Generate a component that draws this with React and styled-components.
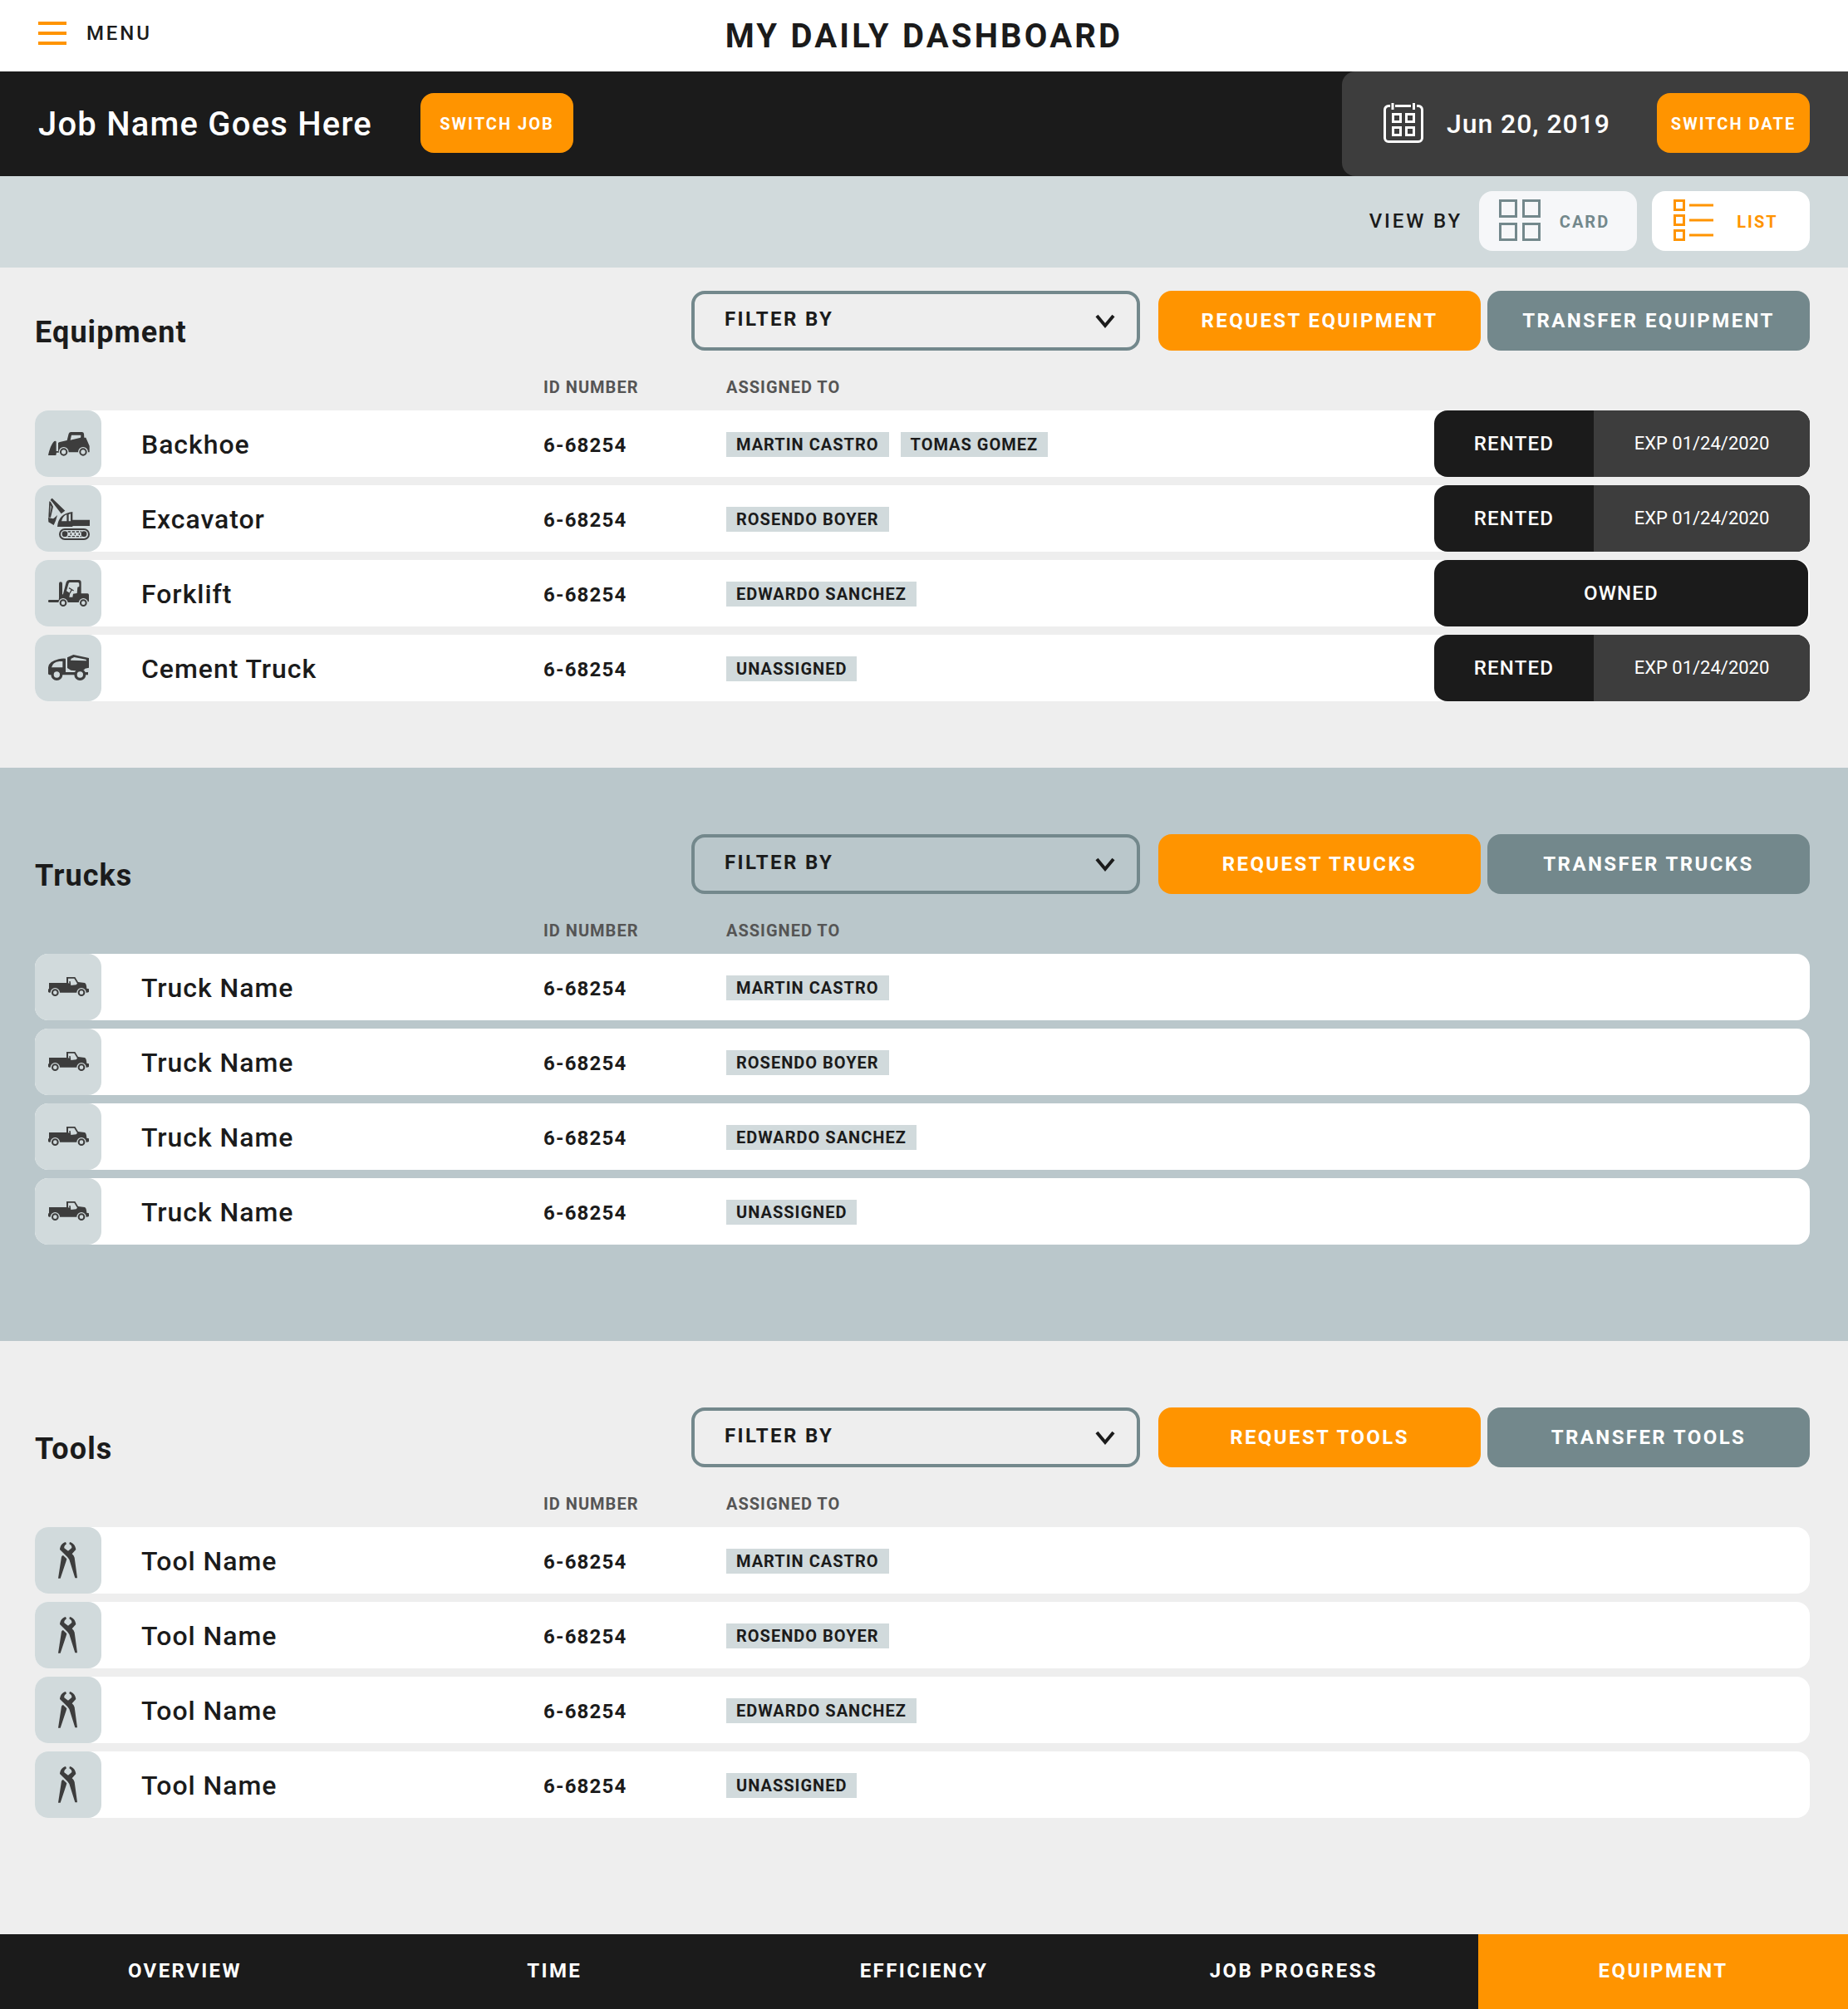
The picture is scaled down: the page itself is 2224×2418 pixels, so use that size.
import React from "react";
import styled, { createGlobalStyle, css } from "styled-components";

const c = {
  ink: "#1b1b1b",
  graphite: "#3d3d3d",
  orange: "#ff9400",
  slate: "#73888c",
  mist: "#d1dadc",
  steel: "#bac7cb",
  paper: "#eeeeee",
  muted: "#555555",
};

const GlobalStyle = createGlobalStyle`
  *, *::before, *::after { box-sizing: border-box; }
  body {
    margin: 0;
    background: ${c.paper};
    color: ${c.ink};
    font-family: Roboto, "Liberation Sans", sans-serif;
  }
  button, select { font: inherit; color: inherit; letter-spacing: inherit; }
`;

const Page = styled.div`
  display: flex;
  flex-direction: column;
  min-height: 100vh;
`;

/* ---------- top bar ---------- */

const TopBar = styled.header`
  display: grid;
  grid-template-columns: 1fr auto 1fr;
  align-items: start;
  padding: 0 46px;
  background: #ffffff;
`;

const MenuButton = styled.button`
  display: flex;
  align-items: center;
  justify-self: start;
  gap: 24px;
  height: 80px;
  padding: 0;
  border: 0;
  background: none;
  font-size: 24px;
  font-weight: 500;
  letter-spacing: 0.12em;
  cursor: pointer;
`;

const PageTitle = styled.h1`
  margin: 0;
  padding-top: 2px;
  font-size: 40px;
  line-height: 84px;
  font-weight: 700;
  letter-spacing: 0.08em;
`;

/* ---------- job bar ---------- */

const JobBar = styled.div`
  display: flex;
  justify-content: space-between;
  background: ${c.ink};
  color: #ffffff;
`;

const JobInfo = styled.div`
  display: flex;
  align-items: center;
  gap: 58px;
  padding: 26px 46px 28px;
`;

const JobName = styled.h2`
  margin: 0;
  padding-top: 4px;
  font-size: 40px;
  line-height: 48px;
  font-weight: 500;
  letter-spacing: 0.03em;
`;

const DateInfo = styled.div`
  display: flex;
  align-items: center;
  gap: 28px;
  padding: 26px 46px 28px 50px;
  border-radius: 16px 0 0 16px;
  background: ${c.graphite};
`;

const DateText = styled.time`
  margin-right: 28px;
  padding-top: 2px;
  font-size: 32px;
  line-height: 40px;
  font-weight: 500;
  letter-spacing: 0.03em;
`;

const SwitchButton = styled.button`
  width: 184px;
  height: 72px;
  padding: 2px 0 0;
  border: 0;
  border-radius: 16px;
  background: ${c.orange};
  color: #ffffff;
  font-size: 20px;
  font-weight: 700;
  letter-spacing: 0.1em;
  white-space: nowrap;
  cursor: pointer;
`;

/* ---------- view bar ---------- */

const ViewBar = styled.div`
  display: flex;
  align-items: center;
  justify-content: flex-end;
  gap: 18px;
  padding: 18px 46px 20px;
  background: ${c.mist};
`;

const ViewLabel = styled.span`
  margin-right: 2px;
  font-size: 24px;
  font-weight: 500;
  letter-spacing: 0.12em;
`;

const ViewButton = styled.button`
  display: flex;
  align-items: center;
  width: 190px;
  height: 72px;
  padding: 0 10px 2px 24px;
  border: 0;
  border-radius: 16px;
  background: ${(p) => (p.$active ? "#ffffff" : "#f6f7f9")};
  color: ${(p) => (p.$active ? c.orange : c.slate)};
  font-size: 20px;
  font-weight: 700;
  letter-spacing: 0.1em;
  cursor: pointer;
`;

const ViewButtonText = styled.span`
  flex: 1;
  padding-top: 4px;
  text-align: center;
`;

/* ---------- sections ---------- */

const Section = styled.section`
  padding: ${(p) => p.$top}px 46px ${(p) => p.$bottom}px 42px;
  background: ${(p) => (p.$tinted ? c.steel : c.paper)};
`;

const SectionHead = styled.div`
  display: flex;
  align-items: flex-end;
  gap: 8px;
`;

const SectionTitle = styled.h2`
  flex: 1;
  margin: 0;
  font-size: 36px;
  line-height: 44px;
  font-weight: 700;
  letter-spacing: 0.03em;
`;

const FilterBox = styled.div`
  position: relative;
  width: 540px;
  height: 72px;
  margin-right: 14px;
  color: ${c.ink};
`;

const FilterSelect = styled.select`
  width: 100%;
  height: 100%;
  padding: 0 72px 4px 36px;
  border: 4px solid ${c.slate};
  border-radius: 16px;
  background: transparent;
  appearance: none;
  font-size: 24px;
  font-weight: 700;
  letter-spacing: 0.1em;
  cursor: pointer;
`;

const FilterArrow = styled.svg`
  position: absolute;
  top: 28px;
  right: 30px;
  pointer-events: none;
`;

const ActionButton = styled.button`
  width: 388px;
  height: 72px;
  padding: 0;
  border: 0;
  border-radius: 16px;
  background: ${(p) => (p.$primary ? c.orange : c.slate)};
  color: #ffffff;
  font-size: 24px;
  font-weight: 700;
  letter-spacing: 0.1em;
  white-space: nowrap;
  cursor: pointer;
`;

/* ---------- asset table ---------- */

const Table = styled.table`
  width: 100%;
  table-layout: fixed;
  border-collapse: separate;
  border-spacing: 0 10px;
`;

const Col = styled.col`
  width: ${(p) => (p.$width ? `${p.$width}px` : "auto")};
`;

const HeadCell = styled.th`
  height: 52px;
  padding: 0 0 6px;
  vertical-align: bottom;
  text-align: left;
  color: ${c.muted};
  font-size: 20px;
  line-height: 24px;
  font-weight: 700;
  letter-spacing: 0.05em;
`;

const cell = css`
  height: 80px;
  padding: 0;
  background: #ffffff;
  text-align: left;
  vertical-align: middle;
`;

const IconCell = styled.td`
  ${cell}
  border-radius: 16px 0 0 16px;
`;

const IconTile = styled.div`
  width: 80px;
  height: 80px;
  border-radius: 16px;
  background: ${c.mist};
`;

const NameCell = styled.th`
  ${cell}
  padding: 2px 0 0 48px;
  font-size: 32px;
  line-height: 40px;
  font-weight: 500;
  letter-spacing: 0.03em;
`;

const IdCell = styled.td`
  ${cell}
  padding-top: 4px;
  font-size: 24px;
  line-height: 28px;
  font-weight: 700;
  letter-spacing: 0.05em;
`;

const PeopleCell = styled.td`
  ${cell}
`;

const People = styled.div`
  display: flex;
  gap: 14px;
  padding-top: 2px;
`;

const Person = styled.span`
  padding: 0 12px;
  background: ${c.mist};
  font-size: 20px;
  line-height: 30px;
  font-weight: 700;
  letter-spacing: 0.05em;
  white-space: nowrap;
`;

const StatusCell = styled.td`
  ${cell}
  border-radius: 0 16px 16px 0;
`;

const Status = styled.div`
  display: flex;
  height: 80px;
  margin-right: ${(p) => (p.$owned ? "2px" : 0)};
  overflow: hidden;
  border-radius: 16px;
  background: ${c.ink};
  color: #ffffff;
  line-height: 80px;
  text-align: center;
`;

const StatusKind = styled.span`
  flex: ${(p) => (p.$owned ? "1" : "0 0 192px")};
  font-size: 24px;
  font-weight: 500;
  letter-spacing: 0.05em;
`;

const StatusExpiry = styled.span`
  flex: 1;
  background: ${c.graphite};
  font-size: 22px;
`;

/* ---------- bottom navigation ---------- */

const BottomNav = styled.nav`
  display: flex;
  margin-top: auto;
  background: ${c.ink};
`;

const NavLink = styled.a`
  flex: 1 1 0;
  background: ${(p) => (p.$active ? c.orange : "transparent")};
  color: #ffffff;
  font-size: 24px;
  line-height: 88px;
  padding-bottom: 2px;
  font-weight: 700;
  letter-spacing: 0.1em;
  text-align: center;
  text-decoration: none;
`;

/* ---------- drawings ---------- */

const MenuIcon = () => (
  <svg width="34" height="28" viewBox="0 0 34 28" fill={c.orange} aria-hidden="true">
    <rect width="34" height="4" />
    <rect y="12" width="34" height="4" />
    <rect y="24" width="34" height="4" />
  </svg>
);

const CalendarIcon = () => (
  <svg width="48" height="48" viewBox="0 0 48 48" fill="none" stroke="#ffffff" strokeWidth="3" aria-hidden="true">
    <path d="M8 3.5H6A4.5 4.5 0 0 0 1.5 8V42A4.5 4.5 0 0 0 6 46.5H42A4.5 4.5 0 0 0 46.5 42V8A4.5 4.5 0 0 0 42 3.5H40M14 3.5H33" />
    <path d="M11 0V8M36.5 0V8" />
    <path d="M11.5 13.5h9v9h-9zM27.5 13.5h9v9h-9zM11.5 29.5h9v9h-9zM27.5 29.5h9v9h-9z" />
  </svg>
);

const CardIcon = () => (
  <svg width="50" height="50" viewBox="0 0 50 50" fill="none" stroke="currentColor" strokeWidth="3" aria-hidden="true">
    <path d="M1.5 1.5h19v19h-19zM29.5 1.5h19v19h-19zM1.5 29.5h19v19h-19zM29.5 29.5h19v19h-19z" />
  </svg>
);

const ListIcon = () => (
  <svg width="50" height="50" viewBox="-2 0 50 50" fill="none" stroke="currentColor" strokeWidth="3" aria-hidden="true">
    <path d="M1.5 1.5h11v11h-11zM1.5 19.5h11v11h-11zM1.5 37.5h11v11h-11z" />
    <path d="M19 7h29M19 25h29M19 43h29" />
  </svg>
);

const TileArt = ({ children }) => (
  <svg width="80" height="80" viewBox="0 0 240 240" fill={c.graphite} display="block" aria-hidden="true">
    {children}
  </svg>
);

const Wheel = ({ x, y, r, halo, line = 6 }) => (
  <>
    <circle cx={x} cy={y} r={halo} fill={c.mist} />
    <circle cx={x} cy={y} r={r} fill="none" stroke={c.graphite} strokeWidth={line} />
  </>
);

const BackhoeArt = () => (
  <TileArt>
    <path d="M48 162C52 142 60 120 70 111Q77 108 77 114V147H87V152H78L76 162Z" />
    <path
      fillRule="evenodd"
      d="M84 152V118Q85 115 90 114L116 108L122 84Q124 78 130 78H170Q176 78 177 84L178 98H184L197 128V151H186V151H84ZM132 89L128 107L165 98Q166 97 166 89Z"
    />
    <Wheel x={104} y={150} r={11} halo={18} />
    <Wheel x={174} y={150} r={11} halo={18} />
  </TileArt>
);

const ExcavatorArt = () => (
  <TileArt>
    <path d="M56 54L60 48Q63 46 67 52L109 92L95 103L62 60Z" />
    <path d="M52 58L57 60L66 77L57 116L49 116Z" />
    <path d="M56 72L59 78L55 106Z" fill={c.mist} />
    <path d="M48 117L66 121Q72 117 81 108L75 128L68 144L49 133Z" />
    <path
      fillRule="evenodd"
      d="M81 150Q84 103 136 96V125H198V147H136V150ZM96 130Q101 110 115 106V130ZM122 105L129 103V130H122Z"
    />
    <rect x="90" y="159" width="105" height="36" rx="18" fill="none" stroke={c.graphite} strokeWidth="6" />
    <circle cx="108" cy="176" r="10" />
    <circle cx="177" cy="176" r="10" />
    <path d="M119 168H168M119 185H168" stroke={c.graphite} strokeWidth="4" strokeDasharray="10 5" />
    <path d="M130 173V180M145 173V180M160 173V180" stroke={c.graphite} strokeWidth="4" />
  </TileArt>
);

const ForkliftArt = () => (
  <TileArt>
    <rect x="48" y="144" width="42" height="9" rx="4" />
    <rect x="87" y="79" width="12" height="66" rx="6" />
    <path
      fillRule="evenodd"
      d="M86 140L102 122L113 80Q116 72 124 72H158Q167 72 167 82V121H190Q195 121 195 127V149L190 153H88ZM122 84Q123 81 127 81H155Q160 81 160 86V96L154 98L152 120L138 122L136 134H124L127 120L114 112Z"
    />
    <path d="M123 101L140 111M133 107L126 120" stroke={c.graphite} strokeWidth="4" fill="none" />
    <Wheel x={102} y={155} r={10} halo={17} />
    <Wheel x={175} y={155} r={10} halo={17} />
  </TileArt>
);

const CementTruckArt = () => (
  <TileArt>
    <path
      fillRule="evenodd"
      d="M48 142V118Q50 96 86 88Q98 85 111 86V135H192V145H52ZM60 118Q64 99 88 96H100V118Z"
    />
    <path
      fillRule="evenodd"
      d="M117 82L139 72L195 84V119L181 122Q176 130 163 130H146L130 128L117 120ZM129 92L131 86L142 81L184 89Q187 92 186 94Z"
    />
    <circle cx="79" cy="144" r="13" fill={c.mist} />
    <circle cx="163" cy="144" r="13" fill={c.mist} />
    <circle cx="79" cy="144" r="16" fill="none" stroke={c.graphite} strokeWidth="10" />
    <circle cx="163" cy="144" r="16" fill="none" stroke={c.graphite} strokeWidth="10" />
  </TileArt>
);

const PickupArt = () => (
  <TileArt>
    <path
      fillRule="evenodd"
      d="M48 138V128L51 126V105H114V84H145L156 102L180 105Q186 107 187 125L195 127V138L188 140H52ZM120 89H142L153 107L149 112L130 114L128 99H124V108L120 105Z"
    />
    <Wheel x={73} y={140} r={10} halo={17} />
    <Wheel x={168} y={140} r={10} halo={17} />
  </TileArt>
);

const PliersArt = () => (
  <TileArt>
    <path d="M111 54C98 58 91 68 90 81L118 109L124 117L145 184H153L143 110Q141 102 134 97L148 81C147 68 139 58 126 54L124 61Q134 66 133 75L120 86L106 76Q104 68 114 61Z" />
    <path d="M102 102L115 115L113 122L92 185H84L96 107Q98 102 102 102Z" />
  </TileArt>
);

/* ---------- content ---------- */

const SECTIONS = [
  {
    title: "Equipment",
    top: 28,
    bottom: 70,
    status: true,
    rows: [
      { name: "Backhoe", Art: BackhoeArt, people: ["MARTIN CASTRO", "TOMAS GOMEZ"], expires: "01/24/2020" },
      { name: "Excavator", Art: ExcavatorArt, people: ["ROSENDO BOYER"], expires: "01/24/2020" },
      { name: "Forklift", Art: ForkliftArt, people: ["EDWARDO SANCHEZ"] },
      { name: "Cement Truck", Art: CementTruckArt, people: ["UNASSIGNED"], expires: "01/24/2020" },
    ],
  },
  {
    title: "Trucks",
    top: 80,
    bottom: 106,
    tinted: true,
    rows: ["MARTIN CASTRO", "ROSENDO BOYER", "EDWARDO SANCHEZ", "UNASSIGNED"].map((person) => ({
      name: "Truck Name",
      Art: PickupArt,
      people: [person],
    })),
  },
  {
    title: "Tools",
    top: 80,
    bottom: 130,
    rows: ["MARTIN CASTRO", "ROSENDO BOYER", "EDWARDO SANCHEZ", "UNASSIGNED"].map((person) => ({
      name: "Tool Name",
      Art: PliersArt,
      people: [person],
    })),
  },
];

const NAV = ["OVERVIEW", "TIME", "EFFICIENCY", "JOB PROGRESS", "EQUIPMENT"];

function StatusBadge({ expires }) {
  const owned = !expires;
  return (
    <Status $owned={owned}>
      <StatusKind $owned={owned}>{owned ? "OWNED" : "RENTED"}</StatusKind>
      {expires && <StatusExpiry>EXP {expires}</StatusExpiry>}
    </Status>
  );
}

function AssetSection({ title, top, bottom, tinted, status, rows }) {
  const upper = title.toUpperCase();
  return (
    <Section $top={top} $bottom={bottom} $tinted={tinted}>
      <SectionHead>
        <SectionTitle>{title}</SectionTitle>
        <FilterBox>
          <FilterSelect aria-label={`Filter ${title.toLowerCase()} by`} defaultValue="">
            <option value="">FILTER BY</option>
          </FilterSelect>
          <FilterArrow width="24" height="18" viewBox="0 0 24 18" fill="none" stroke="currentColor" strokeWidth="4" aria-hidden="true">
            <path d="M2 2L12 14L22 2" />
          </FilterArrow>
        </FilterBox>
        <ActionButton type="button" $primary>REQUEST {upper}</ActionButton>
        <ActionButton type="button">TRANSFER {upper}</ActionButton>
      </SectionHead>
      <Table>
        <colgroup>
          <Col $width={80} />
          <Col $width={532} />
          <Col $width={220} />
          <Col />
          <Col $width={452} />
        </colgroup>
        <thead>
          <tr>
            <HeadCell colSpan={2} />
            <HeadCell scope="col">ID NUMBER</HeadCell>
            <HeadCell scope="col" colSpan={2}>ASSIGNED TO</HeadCell>
          </tr>
        </thead>
        <tbody>
          {rows.map(({ name, Art, people, expires }, i) => (
            <tr key={i}>
              <IconCell>
                <IconTile><Art /></IconTile>
              </IconCell>
              <NameCell scope="row">{name}</NameCell>
              <IdCell>6-68254</IdCell>
              <PeopleCell>
                <People>
                  {people.map((person) => <Person key={person}>{person}</Person>)}
                </People>
              </PeopleCell>
              <StatusCell>{status && <StatusBadge expires={expires} />}</StatusCell>
            </tr>
          ))}
        </tbody>
      </Table>
    </Section>
  );
}

export default function App() {
  const [view, setView] = React.useState("list");
  return (
    <Page>
      <GlobalStyle />
      <TopBar>
        <MenuButton type="button"><MenuIcon />MENU</MenuButton>
        <PageTitle>MY DAILY DASHBOARD</PageTitle>
      </TopBar>
      <JobBar>
        <JobInfo>
          <JobName>Job Name Goes Here</JobName>
          <SwitchButton type="button">SWITCH JOB</SwitchButton>
        </JobInfo>
        <DateInfo>
          <CalendarIcon />
          <DateText dateTime="2019-06-20">Jun 20, 2019</DateText>
          <SwitchButton type="button">SWITCH DATE</SwitchButton>
        </DateInfo>
      </JobBar>
      <ViewBar>
        <ViewLabel>VIEW BY</ViewLabel>
        <ViewButton type="button" $active={view === "card"} aria-pressed={view === "card"} onClick={() => setView("card")}>
          <CardIcon />
          <ViewButtonText>CARD</ViewButtonText>
        </ViewButton>
        <ViewButton type="button" $active={view === "list"} aria-pressed={view === "list"} onClick={() => setView("list")}>
          <ListIcon />
          <ViewButtonText>LIST</ViewButtonText>
        </ViewButton>
      </ViewBar>
      <main>
        {SECTIONS.map((section) => <AssetSection key={section.title} {...section} />)}
      </main>
      <BottomNav>
        {NAV.map((label) => (
          <NavLink key={label} href={`#${label.toLowerCase().replace(" ", "-")}`} $active={label === "EQUIPMENT"}>
            {label}
          </NavLink>
        ))}
      </BottomNav>
    </Page>
  );
}
